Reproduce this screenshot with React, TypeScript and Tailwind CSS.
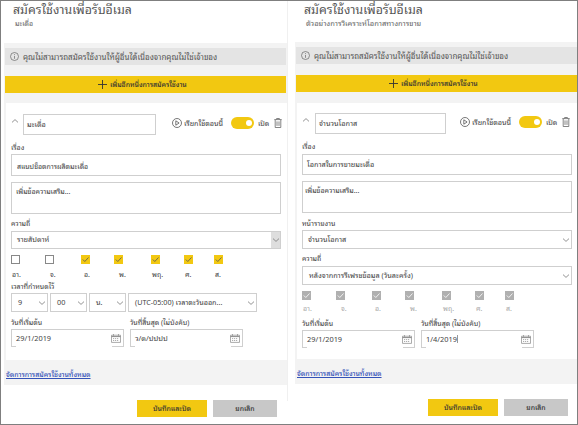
import type { ReactNode } from "react";

type Day = { name: string; width: string; indent: string; checked: boolean };

const days: Day[] = [
  { name: "อา.", width: "w-[34px]", indent: "pl-[1px]", checked: false },
  { name: "จ.", width: "w-[36px]", indent: "pl-[5px]", checked: false },
  { name: "อ.", width: "w-[33px]", indent: "pl-[3px]", checked: true },
  { name: "พ.", width: "w-[37px]", indent: "pl-[5px]", checked: true },
  { name: "พฤ.", width: "w-[33px]", indent: "pl-[1px]", checked: true },
  { name: "ศ.", width: "w-[30px]", indent: "pl-[1px]", checked: true },
  { name: "ส.", width: "w-[20px]", indent: "pl-[1px]", checked: true },
];

function Chevron({ up = false }: { up?: boolean }) {
  return (
    <svg viewBox="0 0 8 8" className="h-[8px] w-[8px] shrink-0" fill="none" stroke="#777" strokeWidth="0.8">
      <path d={up ? "M1 5.4 4 2.6 7 5.4" : "M1 2.6 4 5.4 7 2.6"} />
    </svg>
  );
}

function Calendar() {
  return (
    <svg viewBox="0 0 10 9" className="h-[9px] w-[10px] shrink-0" fill="none" stroke="#888" strokeWidth="0.7">
      <path d="M.5 1.2h9v7.2h-9zM2.5 0v1.8M7.5 0v1.8" />
      <path d="M.5 2.6h9" strokeWidth="1" />
      <path d="M2 4.6h6M2 6.5h6" strokeDasharray="1.2 .8" />
    </svg>
  );
}

function InfoBar() {
  return (
    <div className="flex h-[17px] items-center bg-[#e4e4e4] pl-[5px] text-[#555]">
      <svg viewBox="0 0 9 9" className="mr-[4px] h-[9px] w-[9px] shrink-0" fill="none" stroke="#666" strokeWidth="0.7">
        <circle cx="4.5" cy="4.5" r="4" />
        <path d="M4.5 4v2.8M4.5 2.2v.9" />
      </svg>
      <span className="pt-px text-[8px]">คุณไม่สามารถสมัครใช้งานให้ผู้อื่นได้เนื่องจากคุณไม่ใช่เจ้าของ</span>
    </div>
  );
}

function AddBar() {
  return (
    <div className="flex h-[17px] items-center bg-[#f2c811] pl-[93px] text-[#333]">
      <svg viewBox="0 0 9 9" className="mr-[3px] h-[9px] w-[9px] shrink-0" stroke="#333" strokeWidth="0.9">
        <path d="M4.5 0v9M0 4.5h9" />
      </svg>
      <span className="text-[6.9px] font-medium">เพิ่มอีกหนึ่งการสมัครใช้งาน</span>
    </div>
  );
}

function Label({ children, className = "" }: { children: ReactNode; className?: string }) {
  return <div className={`flex h-[12px] items-center pb-px text-[7px] text-[#444] ${className}`}>{children}</div>;
}

function Select({ children, className }: { children: ReactNode; className: string }) {
  return (
    <div className={`flex items-center justify-between border border-[#cfcfcf] pr-[1px] ${className}`}>
      <span>{children}</span>
      <Chevron />
    </div>
  );
}

function NameRow({ name, lead, box, gap }: { name: string; lead: string; box: string; gap: string }) {
  return (
    <div className="flex h-[21px]">
      <div className={`pt-[3px] ${lead}`}><Chevron up /></div>
      <div className={`flex items-center border border-[#cfcfcf] ${box}`}>{name}</div>
      <div className={`flex h-[18px] items-center ${gap}`}>
        <svg viewBox="0 0 10 10" className="mr-[2px] h-[10px] w-[10px]" fill="none" stroke="#555" strokeWidth="0.8">
          <circle cx="5" cy="5" r="4.5" />
          <path d="M3.8 2.8 7.1 5 3.8 7.2z" />
        </svg>
        <span className="w-[47px] pt-px text-[7.2px]">เรียกใช้ตอนนี้</span>
        <span className="flex h-[12px] w-[23px] items-center justify-end rounded-full bg-[#f2c811] pr-[2px]">
          <span className="h-[6px] w-[6px] rounded-full bg-white" />
        </span>
        <span className="ml-[4px] w-[16px] pb-px text-[7px]">เปิด</span>
        <svg viewBox="0 0 8 10" className="h-[10px] w-[8px]" fill="none" stroke="#666" strokeWidth="0.8">
          <path d="M.3 1.6h7.4M2.6 1.5V.5h2.8v1M1.2 1.8v7.7h5.6V1.8M3 3.4v4.5M5 3.4v4.5" />
        </svg>
      </div>
    </div>
  );
}

function Days({ disabled = false }: { disabled?: boolean }) {
  return (
    <div className="flex">
      {days.map((day) => (
        <div key={day.name} className={`shrink-0 ${day.width}`}>
          <div
            className={`flex h-[9px] w-[9px] items-center justify-center ${
              disabled ? "bg-[#b0b0b0]" : day.checked ? "bg-[#f2c811]" : "border border-[#888]"
            }`}
          >
            {(disabled || day.checked) && (
              <svg viewBox="0 0 9 9" className="h-[9px] w-[9px]" fill="none" stroke={disabled ? "#fff" : "#555"} strokeWidth="0.8">
                <path d="m1.8 4.5 2 2 3.7-4" />
              </svg>
            )}
          </div>
          <div
            className={`flex h-[12px] items-center text-[7px] ${day.indent} ${
              disabled ? "mt-px mb-[2px] text-[#aaa]" : "mt-[3px] text-[#444]"
            }`}
          >
            {day.name}
          </div>
        </div>
      ))}
    </div>
  );
}

function DateField({ label, value, caret = false }: { label: string; value: string; caret?: boolean }) {
  return (
    <div className="w-[119px]">
      <Label>{label}</Label>
      <div className="relative mt-[1px] flex h-[18px] w-[113px] items-center justify-between border border-[#cfcfcf] pr-[2px] pl-[4px] text-[7.4px] text-[#444]">
        <span className={caret ? "border-r border-[#999] pt-px" : "pt-px"}>{value}</span>
        <Calendar />
        <span className="absolute -bottom-px left-[4px] h-px w-[96px] bg-white" />
      </div>
    </div>
  );
}

function Footer() {
  return (
    <>
      <div className="h-[25px] bg-[#f3f3f3] pt-[7px] pl-[2px]">
        <a className="block text-[6.9px] leading-[14px] font-medium text-[#3452b8] underline">จัดการการสมัครใช้งานทั้งหมด</a>
      </div>
      <div className="mt-[15px] flex pl-[133px] text-[6.9px] font-medium text-[#333]">
        <button className="h-[17px] w-[70px] bg-[#f2c811]">บันทึกและปิด</button>
        <button className="ml-[6px] h-[17px] w-[64px] bg-[#c8c8c8]">ยกเลิก</button>
      </div>
    </>
  );
}

export default function App() {
  return (
    <div className="flex h-[425px] w-[578px] overflow-hidden border border-[#7f7f7f] bg-white font-['Leelawadee_UI','Noto_Sans_Thai_Looped','Noto_Looped_Thai','Loma','Waree','Noto_Sans','Open_Sans',sans-serif] text-[7.3px] leading-none whitespace-nowrap text-[#444]">
      <section className="ml-[3px] w-[283px] shrink-0">
        <header className="h-[42px] pl-[9px]">
          <h1 className="h-[17px] text-[12.3px] leading-[15px] text-[#555]">สมัครใช้งานเพื่อรับอีเมล</h1>
          <p className="pl-[2px] text-[7px] leading-[10px] text-[#666]">มะเดื่อ</p>
        </header>
        <div className="bg-[#f3f3f3] px-[1px] pt-[5px] pb-[10px]">
          <InfoBar />
          <div className="h-[11px]" />
          <AddBar />
        </div>
        <main className="h-[257px] border-l-2 border-[#f3f3f3] pt-[11px] pl-[5px]">
          <NameRow name="มะเดื่อ" lead="w-[12px]" box="w-[133px] pl-[3px]" gap="ml-[16px]" />
          <Label className="mt-[6px]">เรื่อง</Label>
          <div className="mt-[1px] flex h-[22px] w-[270px] items-center border border-[#cfcfcf] pl-[5px] text-[7px]">สแนปช็อตการผลิตมะเดื่อ</div>
          <div className="mt-[6px] h-[32px] w-[270px] border border-[#cfcfcf] pt-[4px] pl-[4px] text-[7px]">เพิ่มข้อความเสริม...</div>
          <Label className="mt-[3px]">ความถี่</Label>
          <div className="mt-[2px] flex h-[18px] w-[270px] items-center justify-between border border-[#cfcfcf] pl-[5px]">
            <span>รายสัปดาห์</span>
            <span className="flex h-full w-[9px] items-center justify-center bg-[#dedede]"><Chevron /></span>
          </div>
          <div className="h-[6px]" />
          <Days />
          <Label className="mt-[1px]">เวลาที่กำหนดไว้</Label>
          <div className="mt-[1px] flex gap-[2px]">
            <Select className="h-[19px] w-[37px] pl-[6px]">9</Select>
            <Select className="h-[19px] w-[37px] pl-[6px]">00</Select>
            <Select className="h-[19px] w-[37px] pl-[6px]">น.</Select>
            <Select className="h-[19px] w-[129px] pl-[6px] text-[7.2px]">(UTC-05:00) เวลาตะวันออก...</Select>
          </div>
          <div className="mt-[4px] flex">
            <DateField label="วันที่เริ่มต้น" value="29/1/2019" />
            <DateField label="วันที่สิ้นสุด (ไม่บังคับ)" value="ว/ด/ปปปป" />
          </div>
        </main>
        <Footer />
      </section>
      <div className="h-[400px] w-[1px] shrink-0 bg-[#f0f0f0]" />
      <section className="ml-[7px] w-[283px] shrink-0">
        <header className="h-[41px] pl-[9px]">
          <h1 className="h-[17px] text-[12.3px] leading-[15px] text-[#555]">สมัครใช้งานเพื่อรับอีเมล</h1>
          <p className="pl-[2px] text-[7.5px] leading-[10px] text-[#666]">ตัวอย่างการวิเคราะห์โอกาสทางการขาย</p>
        </header>
        <div className="bg-[#f3f3f3] pt-[5px] pb-[11px] pl-[1px]">
          <InfoBar />
          <div className="h-[11px]" />
          <AddBar />
        </div>
        <main className="h-[256px] border-l-2 border-[#f3f3f3] pt-[10px] pl-[5px]">
          <NameRow name="จำนวนโอกาส" lead="w-[13px]" box="w-[131px] pl-[3px]" gap="ml-[14px]" />
          <Label className="mt-[6px]">เรื่อง</Label>
          <div className="mt-[2px] flex h-[21px] w-[270px] items-center border border-[#cfcfcf] pl-[4px]">โอกาสในการขายมะเดื่อ</div>
          <div className="mt-[6px] h-[32px] w-[270px] border border-[#cfcfcf] pt-[4px] pl-[2px] text-[7px]">เพิ่มข้อความเสริม...</div>
          <Label className="mt-[4px]">หน้ารายงาน</Label>
          <Select className="mt-[1px] h-[19px] w-[270px] pl-[5px]">จำนวนโอกาส</Select>
          <Label className="mt-[3px]">ความถี่</Label>
          <Select className="mt-[2px] h-[19px] w-[270px] pl-[6px]">หลังจากการรีเฟรชข้อมูล (วันละครั้ง)</Select>
          <div className="h-[6px]" />
          <Days disabled />
          <div className="mt-[2px] flex">
            <DateField label="วันที่เริ่มต้น" value="29/1/2019" />
            <DateField label="วันที่สิ้นสุด (ไม่บังคับ)" value="1/4/2019" caret />
          </div>
        </main>
        <Footer />
      </section>
    </div>
  );
}
